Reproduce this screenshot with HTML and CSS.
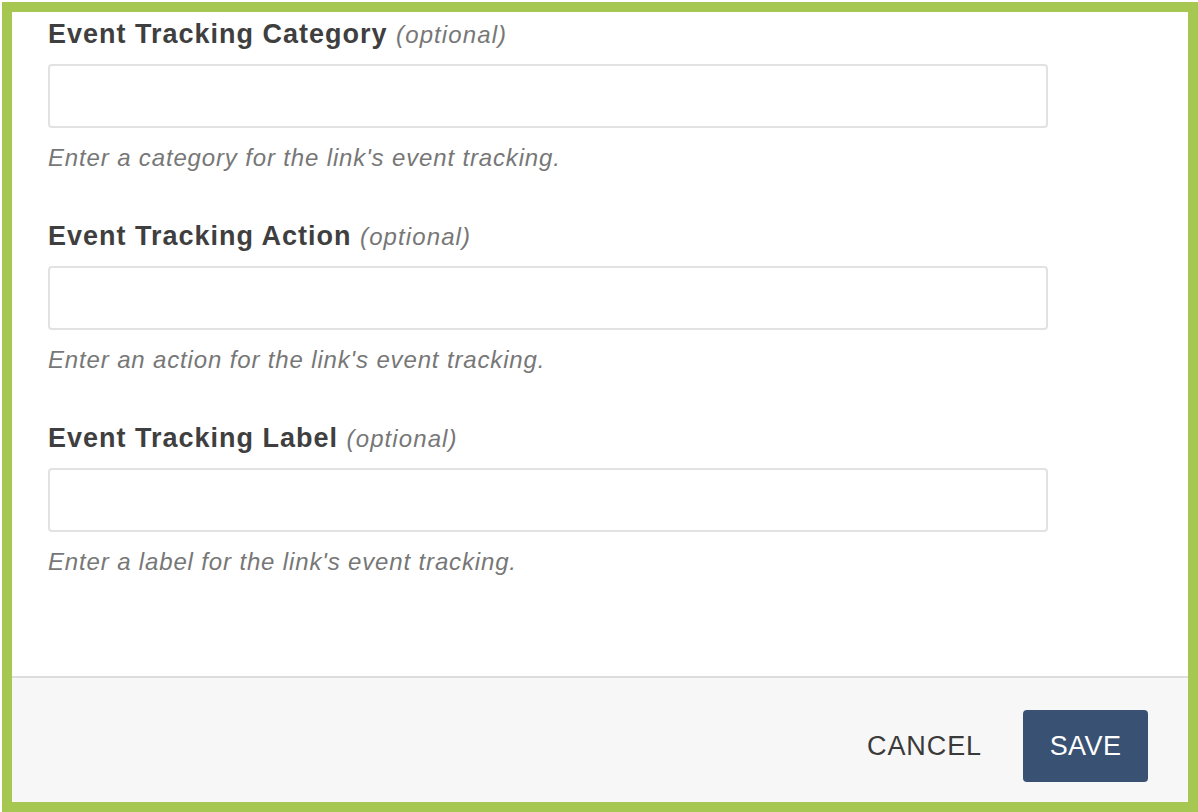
FILE: index.html
```html
<!DOCTYPE html>
<html lang="en">
<head>
<meta charset="utf-8">
<title>Event Tracking</title>
<link rel="stylesheet" href="styles.css">
</head>
<body>
<div class="frame">
  <div class="content">
    <div class="group">
      <label class="label" for="cat">Event Tracking Category <span class="opt">(optional)</span></label>
      <input class="field" id="cat" type="text">
      <p class="hint">Enter a category for the link's event tracking.</p>
    </div>
    <div class="group">
      <label class="label" for="act">Event Tracking Action <span class="opt">(optional)</span></label>
      <input class="field" id="act" type="text">
      <p class="hint">Enter an action for the link's event tracking.</p>
    </div>
    <div class="group">
      <label class="label" for="lbl">Event Tracking Label <span class="opt">(optional)</span></label>
      <input class="field" id="lbl" type="text">
      <p class="hint">Enter a label for the link's event tracking.</p>
    </div>
  </div>
  <div class="footer">
    <button class="btn-cancel" type="button">CANCEL</button>
    <button class="btn-save" type="button">SAVE</button>
  </div>
</div>
</body>
</html>
```
FILE: styles.css
```css
html, body {
  margin: 0;
  padding: 0;
  background: #ffffff;
}
body {
  font-family: "Liberation Sans", Arial, sans-serif;
  width: 1198px;
  height: 812px;
  overflow: hidden;
}
.frame {
  box-sizing: border-box;
  margin: 2px 0 0 2px;
  width: 1196px;
  height: 810px;
  border: 10px solid #a6c852;
  display: flex;
  flex-direction: column;
  background: #ffffff;
}
.content {
  flex: 1;
  min-height: 0;
  padding: 4px 0 0 36px;
}
.group {
  display: flex;
  flex-direction: column;
  margin-bottom: 44px;
}
.label {
  display: block;
  font-size: 27px;
  line-height: 36px;
  font-weight: bold;
  letter-spacing: 1px;
  color: #3f3f3f;
}
.opt {
  font-weight: normal;
  font-style: italic;
  font-size: 24px;
  letter-spacing: 1.1px;
  color: #777777;
}
.field {
  box-sizing: border-box;
  margin: 11px 0 0 0;
  width: 1000px;
  height: 64px;
  border: 2px solid #e2e2e2;
  border-radius: 4px;
  background: #ffffff;
  padding: 0 16px;
  font: inherit;
  font-size: 24px;
  outline: none;
}
.hint {
  margin: 14px 0 0 0;
  font-size: 24px;
  line-height: 32px;
  font-style: italic;
  letter-spacing: 0.85px;
  color: #777777;
}
.footer {
  box-sizing: border-box;
  flex: none;
  height: 126px;
  border-top: 2px solid #dddddd;
  background: #f7f7f7;
  display: flex;
  justify-content: flex-end;
  align-items: flex-start;
  padding: 32px 40px 0 0;
}
.btn-cancel {
  font-family: "Liberation Sans", Arial, sans-serif;
  font-size: 27px;
  letter-spacing: 0.9px;
  color: #3a3a3a;
  background: transparent;
  border: none;
  padding: 0;
  height: 72px;
  margin-right: 41px;
  cursor: pointer;
}
.btn-save {
  font-family: "Liberation Sans", Arial, sans-serif;
  font-size: 27px;
  letter-spacing: 0.4px;
  color: #ffffff;
  background: #395173;
  border: none;
  border-radius: 4px;
  width: 125px;
  height: 72px;
  padding: 0;
  cursor: pointer;
}
```
